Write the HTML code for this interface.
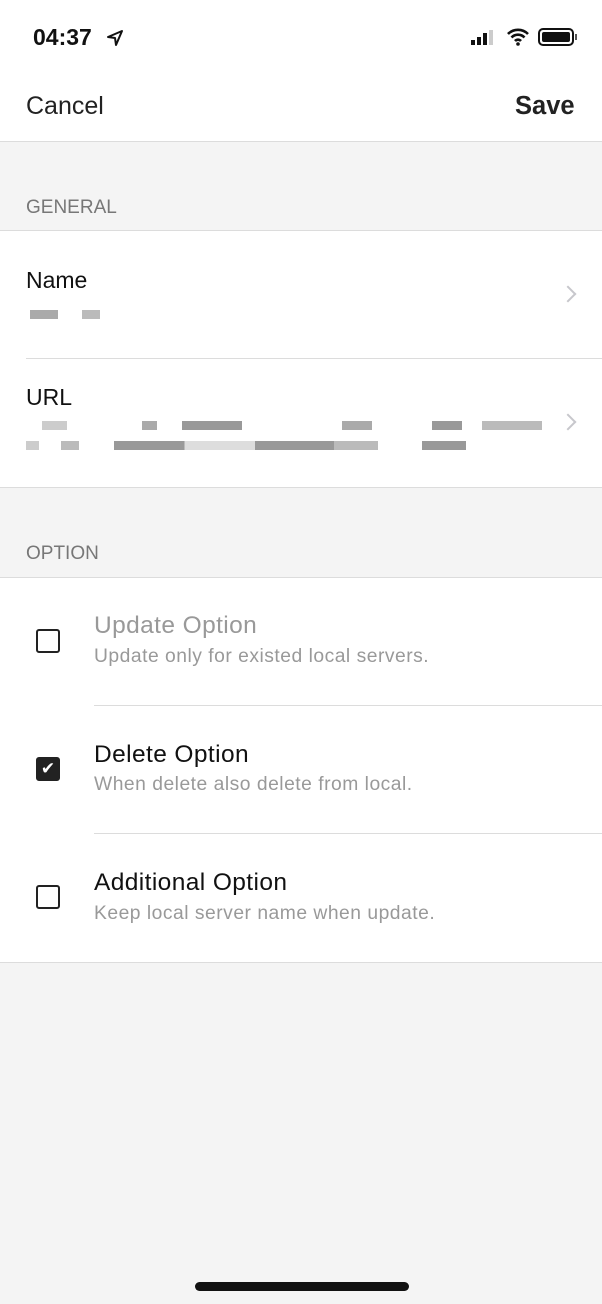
<!DOCTYPE html><html><head><style>
*{margin:0;padding:0;box-sizing:border-box}
body{width:602px;height:1304px;background:#f4f4f4;font-family:"Liberation Sans",sans-serif;position:relative;overflow:hidden;color:#111}
.a{position:absolute}
.w{background:#fff;left:0;width:602px}
.ln{height:1px;background:#dcdcdc}
.sec{font-size:19px;color:#777;left:26px}
.t{font-size:23px;left:26px}
.chev{left:562px;width:12px;height:12px;border-right:2px solid #c7c7cc;border-top:2px solid #c7c7cc;transform:rotate(45deg)}
.cb{left:36px;width:24px;height:24px;border:2.5px solid #222;border-radius:3px}
.ot{left:94px;font-size:24.5px;letter-spacing:0.4px}
.os{left:94px;font-size:19.3px;color:#999;letter-spacing:0.5px}
.p{background:#999;height:9px}
</style></head><body>
<div class="a w" style="top:0;height:141px"></div>
<div class="a" style="left:33px;top:24px;font-size:23px;font-weight:bold">04:37</div>
<svg class="a" style="left:106px;top:29px" width="18" height="18" viewBox="0 0 18 18"><path d="M16 2L2 8l7 1 1 7z" fill="none" stroke="#111" stroke-width="2" stroke-linejoin="round"/></svg>
<div class="a" style="left:471px;top:40px;width:4px;height:5px;background:#111"></div>
<div class="a" style="left:477px;top:37px;width:4px;height:8px;background:#111"></div>
<div class="a" style="left:483px;top:33px;width:4px;height:12px;background:#111"></div>
<div class="a" style="left:489px;top:30px;width:4px;height:15px;background:#ccc"></div>
<svg class="a" style="left:507px;top:28px" width="22" height="18" viewBox="0 0 22 18"><path d="M1 6a14 14 0 0 1 20 0M4.5 9.5a9 9 0 0 1 13 0M8 13a4 4 0 0 1 6 0" fill="none" stroke="#111" stroke-width="2.6"/><circle cx="11" cy="16" r="1.8" fill="#111"/></svg>
<div class="a" style="left:538px;top:28px;width:36px;height:18px;border:2px solid #111;border-radius:5px;padding:2px"><div style="background:#111;width:100%;height:100%;border-radius:2px"></div></div>
<div class="a" style="left:575px;top:34px;width:2px;height:6px;background:#555"></div>
<div class="a" style="left:26px;top:92px;font-size:25px;color:#222">Cancel</div>
<div class="a" style="left:515px;top:92px;font-size:25.5px;font-weight:bold;color:#222">Save</div>
<div class="a ln" style="top:141px;left:0;width:602px"></div>
<div class="a sec" style="top:197px">GENERAL</div>
<div class="a ln" style="top:230px;left:0;width:602px"></div>
<div class="a w" style="top:231px;height:256px"></div>
<div class="a t" style="top:267px">Name</div>
<div class="a p" style="left:30px;top:310px;width:28px;background:#aaa"></div>
<div class="a p" style="left:82px;top:310px;width:18px;background:#bbb"></div>
<div class="a chev" style="top:288px"></div>
<div class="a ln" style="top:358px;left:26px;width:576px"></div>
<div class="a t" style="top:384px">URL</div>
<div class="a p" style="left:42px;top:421px;width:500px;background:linear-gradient(90deg,#ccc 0 5%,#fff 5% 20%,#aaa 20% 23%,#fff 23% 28%,#999 28% 40%,#fff 40% 60%,#aaa 60% 66%,#fff 66% 78%,#999 78% 84%,#fff 84% 88%,#bbb 88% 100%)"></div>
<div class="a p" style="left:26px;top:441px;width:440px;background:linear-gradient(90deg,#ccc 0 3%,#fff 3% 8%,#bbb 8% 12%,#fff 12% 20%,#999 20% 36%,#ddd 36% 52%,#999 52% 70%,#bbb 70% 80%,#fff 80% 90%,#999 90% 100%)"></div>
<div class="a chev" style="top:416px"></div>
<div class="a ln" style="top:487px;left:0;width:602px"></div>
<div class="a sec" style="top:543px">OPTION</div>
<div class="a ln" style="top:577px;left:0;width:602px"></div>
<div class="a w" style="top:578px;height:384px"></div>
<div class="a cb" style="top:629px"></div>
<div class="a ot" style="top:612px;color:#999">Update Option</div>
<div class="a os" style="top:646px">Update only for existed local servers.</div>
<div class="a ln" style="top:705px;left:94px;width:508px"></div>
<div class="a cb" style="top:757px;background:#222;color:#fff;font-size:17px;line-height:19px;text-align:center">✔</div>
<div class="a ot" style="top:741px">Delete Option</div>
<div class="a os" style="top:774px">When delete also delete from local.</div>
<div class="a ln" style="top:833px;left:94px;width:508px"></div>
<div class="a cb" style="top:885px"></div>
<div class="a ot" style="top:869px">Additional Option</div>
<div class="a os" style="top:903px">Keep local server name when update.</div>
<div class="a ln" style="top:962px;left:0;width:602px"></div>
<div class="a" style="left:195px;top:1282px;width:214px;height:9px;border-radius:5px;background:#111"></div>
</body></html>
